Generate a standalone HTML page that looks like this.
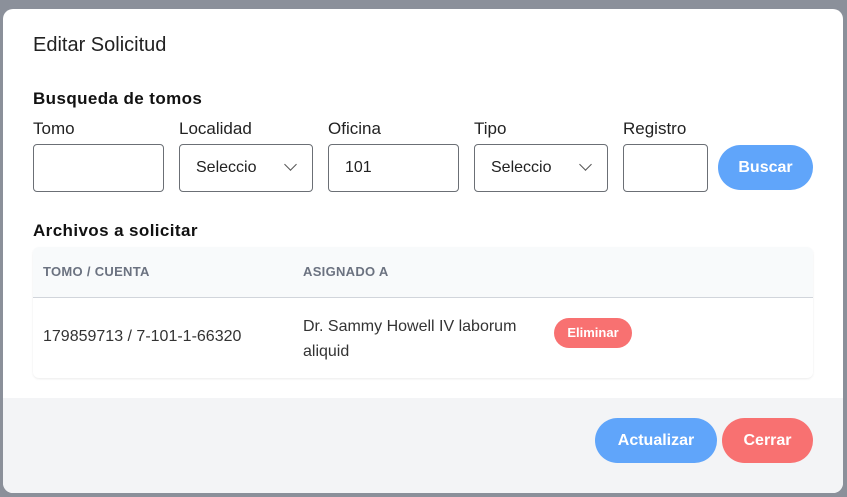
<!DOCTYPE html>
<html><head><meta charset="utf-8"><style>
*{box-sizing:border-box;margin:0;padding:0}
body{width:847px;height:497px;background:#8b909a;font-family:"Liberation Sans",sans-serif;position:relative;overflow:hidden;color:#1f2328}
.m{position:absolute;left:3px;top:9px;width:840px;height:484px;background:#fff;border-radius:10px;overflow:hidden}
.a{position:absolute}
.t{font-size:20px;color:#222}
.h{font-size:17px;font-weight:bold;letter-spacing:.4px;color:#111}
.l{font-size:17px;color:#222}
.in{position:absolute;top:135px;height:48px;border:1px solid #6b6f75;border-radius:4px;font-size:16px;padding-left:16px;line-height:46px;color:#222}
.btn{position:absolute;border-radius:23px;color:#fff;font-weight:bold;font-size:16px;text-align:center}
.chev{position:absolute;right:17px;top:15px;width:9px;height:9px;border-right:1.5px solid #555;border-bottom:1.5px solid #555;transform:rotate(45deg)}
</style></head><body>
<div class="m">
<div class="a t" style="left:30px;top:25px">Editar Solicitud</div>
<div class="a h" style="left:30px;top:80px">Busqueda de tomos</div>
<div class="a l" style="left:30px;top:110px">Tomo</div>
<div class="a l" style="left:176px;top:110px">Localidad</div>
<div class="a l" style="left:325px;top:110px">Oficina</div>
<div class="a l" style="left:471px;top:110px">Tipo</div>
<div class="a l" style="left:620px;top:110px">Registro</div>
<div class="in" style="left:30px;width:131px"></div>
<div class="in" style="left:176px;width:134px">Seleccio<div class="chev"></div></div>
<div class="in" style="left:325px;width:131px">101</div>
<div class="in" style="left:471px;width:134px">Seleccio<div class="chev"></div></div>
<div class="in" style="left:620px;width:85px"></div>
<div class="btn" style="left:715px;top:136px;width:95px;height:45px;line-height:45px;background:#60a5fa">Buscar</div>
<div class="a h" style="left:30px;top:212px">Archivos a solicitar</div>
<div class="a" style="left:30px;top:238px;width:780px;height:131px;border-radius:6px;box-shadow:0 1px 2px rgba(0,0,0,.08);overflow:hidden">
 <div style="height:51px;background:#f8fafb;border-bottom:1px solid #d1d5db;font-size:13px;font-weight:bold;color:#6b7280;letter-spacing:.3px;position:relative">
  <span class="a" style="left:10px;top:17px">TOMO / CUENTA</span><span class="a" style="left:270px;top:17px">ASIGNADO A</span></div>
 <div class="a" style="left:10px;top:81px;font-size:16px;color:#333">179859713 / 7-101-1-66320</div>
 <div class="a" style="left:270px;top:67px;font-size:16px;color:#333;line-height:25px;width:250px">Dr. Sammy Howell IV laborum<br>aliquid</div>
 <div class="btn" style="left:521px;top:71px;width:78px;height:30px;line-height:30px;font-size:13px;background:#f87171">Eliminar</div>
</div>
<div class="a" style="left:0;top:389px;width:840px;height:95px;background:#f3f4f6"></div>
<div class="btn" style="left:592px;top:409px;width:122px;height:45px;line-height:45px;background:#60a5fa">Actualizar</div>
<div class="btn" style="left:719px;top:409px;width:91px;height:45px;line-height:45px;background:#f87171">Cerrar</div>
</div>
</body></html>
